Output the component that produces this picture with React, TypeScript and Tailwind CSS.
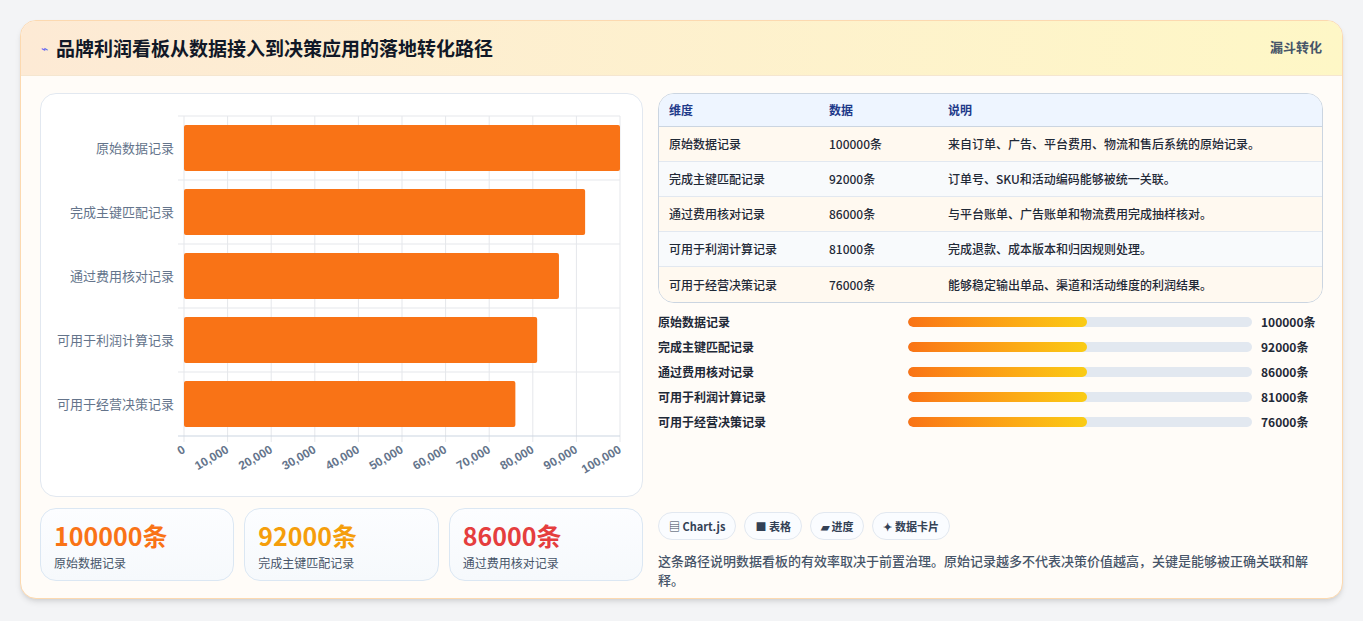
import React from "react";

const rows = [
  { n: "原始数据记录", v: 100000, d: "来自订单、广告、平台费用、物流和售后系统的原始记录。" },
  { n: "完成主键匹配记录", v: 92000, d: "订单号、SKU和活动编码能够被统一关联。" },
  { n: "通过费用核对记录", v: 86000, d: "与平台账单、广告账单和物流费用完成抽样核对。" },
  { n: "可用于利润计算记录", v: 81000, d: "完成退款、成本版本和归因规则处理。" },
  { n: "可用于经营决策记录", v: 76000, d: "能够稳定输出单品、渠道和活动维度的利润结果。" },
];

const font = { fontFamily: '"Noto Sans CJK SC", "Noto Sans", sans-serif' };

function Chart() {
  const x0 = 143, x1 = 579, y0 = 22, y1 = 342;
  const rh = (y1 - y0) / 5;
  const ticks = Array.from({ length: 11 }, (_, i) => i * 10000);
  const sx = (v: number) => x0 + ((x1 - x0) * v) / 100000;
  return (
    <svg width="600" height="400" className="block">
      {ticks.map((t) => (
        <line key={t} x1={sx(t)} x2={sx(t)} y1={y0} y2={y1 + 6} stroke="#e5e7eb" />
      ))}
      {Array.from({ length: 6 }, (_, i) => (
        <line key={i} x1={x0 - 6} x2={x1} y1={y0 + i * rh} y2={y0 + i * rh} stroke={i === 5 ? "#cbd5e1" : "#e5e7eb"} />
      ))}
      {rows.map((r, i) => (
        <g key={r.n}>
          <rect x={x0} y={y0 + i * rh + 9} width={sx(r.v) - x0} height={rh - 18} rx="2" fill="#f97316" />
          <text x={x0 - 10} y={y0 + i * rh + rh / 2 + 5} textAnchor="end" fontSize="13" fill="#64748b" style={font}>{r.n}</text>
        </g>
      ))}
      {ticks.map((t) => (
        <text key={t} x={sx(t) + 2} y={y1 + 16} textAnchor="end" fontSize="12" fontWeight="bold" fill="#64748b" transform={`rotate(-30 ${sx(t) + 2} ${y1 + 16})`} style={{ fontFamily: '"Liberation Sans", sans-serif' }}>
          {t.toLocaleString("en-US")}
        </text>
      ))}
    </svg>
  );
}

export default function App() {
  return (
    <div className="w-[1363px] h-[621px] bg-[#f3f4f6] p-[20px] pt-[20px]" style={font}>
      <div className="h-[579px] rounded-2xl border border-[#fcd9b0] bg-[#fffcf8] overflow-hidden shadow-md">
        <div className="h-[55px] flex items-center justify-between px-5 bg-gradient-to-r from-[#fdead5] to-[#fef7c6] border-b border-[#f5e6d0]">
          <div className="flex items-center gap-2">
            <span className="text-[#6366f1] text-xs">⌁</span>
            <span className="text-[19px] font-bold text-[#111827]">品牌利润看板从数据接入到决策应用的落地转化路径</span>
          </div>
          <span className="text-[13px] font-bold text-[#475569] self-start mt-[16px]">漏斗转化</span>
        </div>
        <div className="flex gap-[15px] px-[19px] pt-[17px]">
          <div className="w-[603px] flex flex-col gap-[11px]">
            <div className="h-[404px] rounded-2xl border border-[#e2e8f0] bg-white">
              <Chart />
            </div>
            <div className="grid grid-cols-3 gap-[10px]">
              {[
                ["100000条", "原始数据记录", "text-[#f97316]"],
                ["92000条", "完成主键匹配记录", "text-[#f59e0b]"],
                ["86000条", "通过费用核对记录", "text-[#e53e3e]"],
              ].map(([v, n, c]) => (
                <div key={n} className="h-[73px] rounded-2xl border border-[#dbe7f3] bg-gradient-to-b from-[#fcfdff] to-[#f6f9fc] px-[13px] pt-[8px]">
                  <div className={`text-[25px] font-bold leading-[36px] ${c}`}>{v}</div>
                  <div className="text-[12px] text-[#475569] mt-[1px]">{n}</div>
                </div>
              ))}
            </div>
          </div>
          <div className="flex-1 flex flex-col">
            <div className="rounded-2xl border border-[#cbd5e1] overflow-hidden text-[12px] text-[#1f2937] font-medium">
              <div className="flex h-[33px] items-center bg-[#eef5ff] text-[#1e3a8a] font-bold border-b border-[#cbd5e1]">
                <div className="w-[170px] pl-[10px]">维度</div>
                <div className="w-[119px]">数据</div>
                <div>说明</div>
              </div>
              {rows.map((r, i) => (
                <div key={r.n} className={`flex h-[35px] items-center ${i < 4 ? "border-b border-[#e2e8f0]" : ""} ${i % 2 ? "bg-[#f8fafc]" : "bg-[#fff9f0]"}`}>
                  <div className="w-[170px] pl-[10px]">{r.n}</div>
                  <div className="w-[119px]">{r.v}条</div>
                  <div>{r.d}</div>
                </div>
              ))}
            </div>
            <div className="flex flex-col gap-[7px] mt-[10px]">
              {rows.map((r) => (
                <div key={r.n} className="flex items-center h-[18px] text-[12px] font-bold text-[#1f2937]">
                  <div className="w-[250px]">{r.n}</div>
                  <div className="w-[344px] h-[10px] rounded-full bg-[#e2e8f0] overflow-hidden">
                    <div className="w-[52%] h-full rounded-full bg-gradient-to-r from-[#f97316] to-[#facc15]" />
                  </div>
                  <div className="ml-[9px]">{r.v}条</div>
                </div>
              ))}
            </div>
            <div className="flex gap-[8px] mt-[81px]">
              {["▤ Chart.js", "■ 表格", "▰ 进度", "✦ 数据卡片"].map((b) => (
                <span key={b} className="h-[28px] px-[10px] rounded-full border border-[#e2e8f0] bg-[#fafcff] text-[11px] font-bold text-[#334155] flex items-center">{b}</span>
              ))}
            </div>
            <p className="mt-[11px] text-[13px] leading-[19px] text-[#475569] font-medium">
              这条路径说明数据看板的有效率取决于前置治理。原始记录越多不代表决策价值越高，关键是能够被正确关联和解释。
            </p>
          </div>
        </div>
      </div>
    </div>
  );
}
